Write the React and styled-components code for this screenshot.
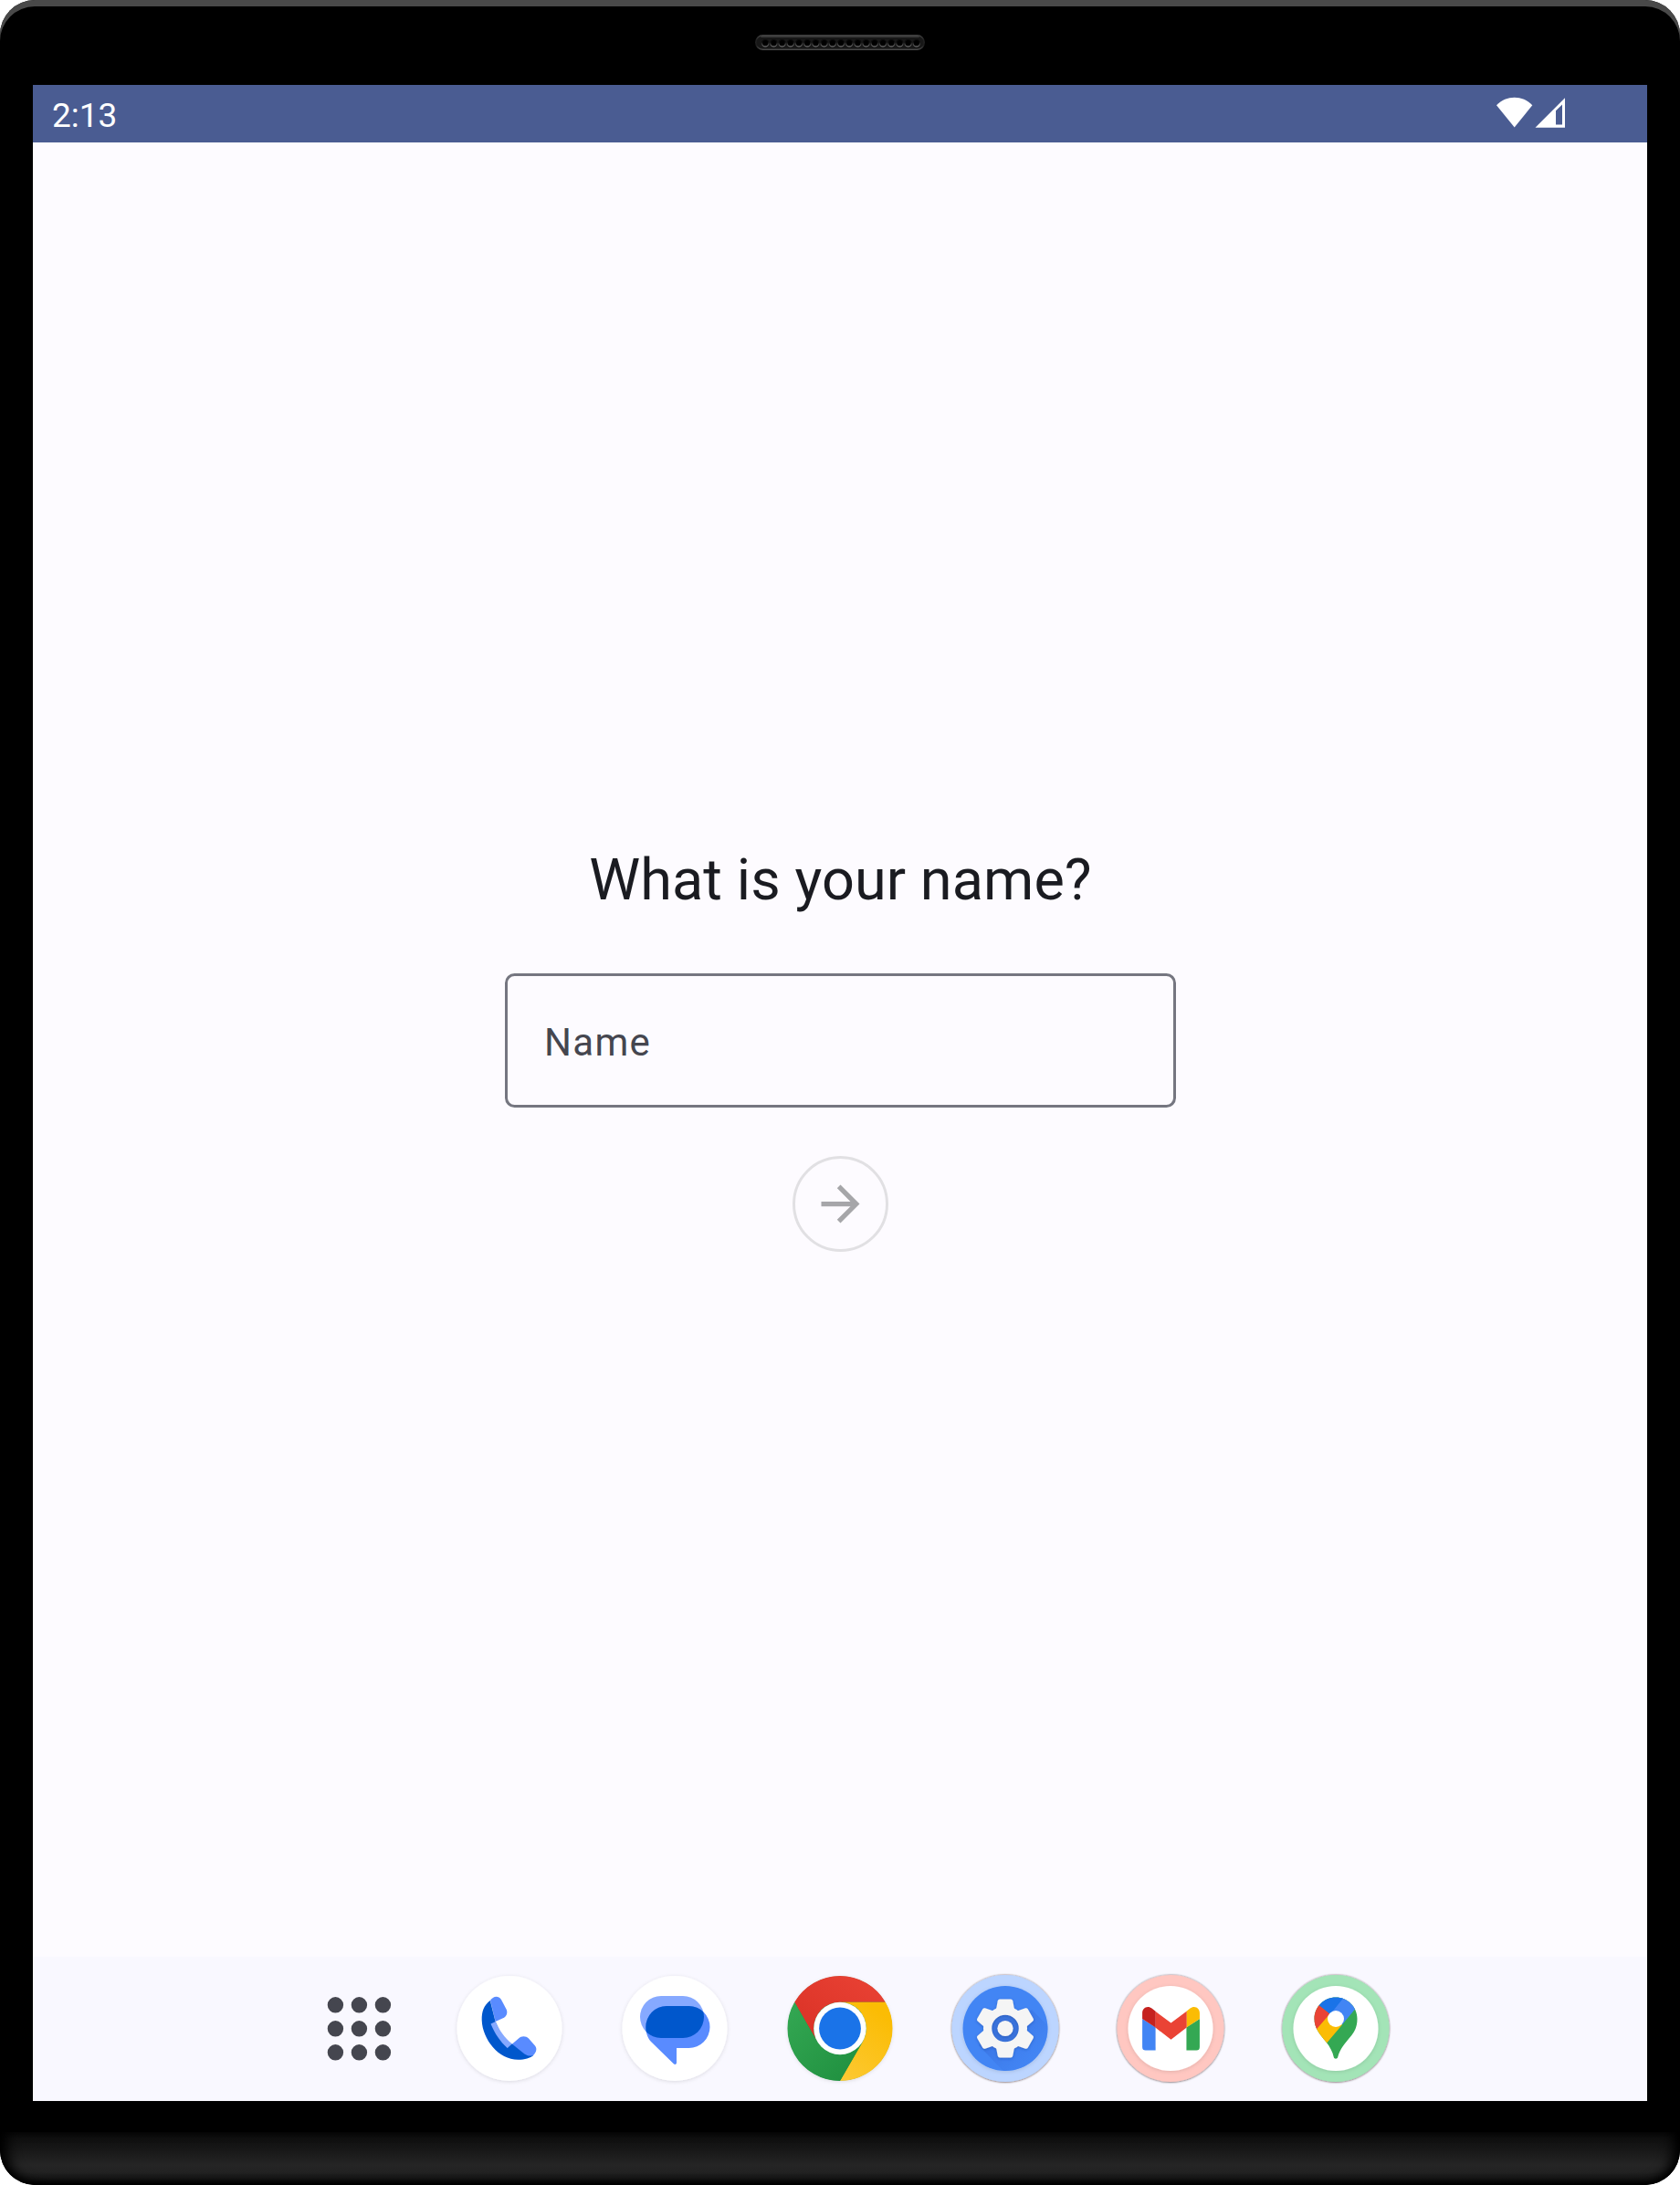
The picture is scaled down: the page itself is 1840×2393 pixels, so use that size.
import React from 'react';
import styled, { createGlobalStyle } from 'styled-components';

const GlobalStyle = createGlobalStyle`
  *, *::before, *::after { box-sizing: border-box; }
  html, body { margin: 0; padding: 0; background: #fff; }
  body { font-family: Roboto, 'Liberation Sans', sans-serif; }
`;

const Device = styled.div`
  width: 1840px;
  height: 2393px;
  border-radius: 38px;
  background: #000;
  overflow: hidden;
  display: flex;
  flex-direction: column;
  box-shadow: inset 0 7px 0 0 #494949;
`;

const TopBezel = styled.div`
  height: 93px;
  flex: none;
  display: flex;
  justify-content: center;
  align-items: flex-start;
  padding: 38px 1px 0 0;
`;

const Speaker = styled.svg`
  display: block;
`;

const Screen = styled.main`
  width: 1768px;
  height: 2208px;
  flex: none;
  margin: 0 36px;
  background: #fdfbff;
  display: flex;
  flex-direction: column;
`;

const StatusBar = styled.header`
  height: 63px;
  flex: none;
  background: #4a5c92;
  color: #fff;
  display: flex;
  align-items: center;
  justify-content: space-between;
  padding: 0 90px 0 21px;
`;

const Clock = styled.time`
  margin-top: 4px;
  font-size: 37px;
  line-height: 44px;
`;

const StatusIcons = styled.div`
  display: flex;
  align-items: flex-end;
  gap: 2px;
  margin-bottom: 3px;
  svg { display: block; }
`;

const Content = styled.section`
  flex: 1;
  display: flex;
  flex-direction: column;
  align-items: center;
  padding: 766px 0 0 1px;
`;

const Title = styled.h1`
  margin: 0;
  font-size: 63px;
  line-height: 84px;
  font-weight: 400;
  letter-spacing: 0.08px;
  color: #1a1b21;
`;

const Field = styled.label`
  width: 735px;
  height: 147px;
  margin-top: 60px;
  border: 3px solid #757680;
  border-radius: 10.5px;
  display: flex;
  align-items: center;
  padding: 4px 39px 0 40px;
`;

const Input = styled.input`
  width: 100%;
  border: 0;
  padding: 0;
  outline: 0;
  background: transparent;
  font: 400 42px/63px Roboto, 'Liberation Sans', sans-serif;
  letter-spacing: 1.31px;
  &::placeholder { color: #45464f; opacity: 1; }
`;

const NextButton = styled.button`
  width: 105px;
  height: 105px;
  margin-top: 53px;
  padding: 0;
  border: 3px solid #e1e0e3;
  border-radius: 50%;
  background: transparent;
  color: #a6a6a9;
  display: flex;
  align-items: center;
  justify-content: center;
  svg { display: block; }
`;

const Taskbar = styled.nav`
  height: 158px;
  flex: none;
  background: #f9f8ff;
  display: flex;
  align-items: flex-start;
  padding: 12.5px 0 0 292px;
  gap: 49px;
`;

const AppIcon = styled.svg`
  width: 132px;
  height: 132px;
  flex: none;
  display: block;
  overflow: visible;
`;

const GridIcon = styled(AppIcon)`
  margin-right: -16.6px;
`;

const Chin = styled.footer`
  flex: 1;
  margin-top: 34px;
  background: linear-gradient(#0d0d0d 0%, #161616 30%, #252525 62%, #222 76%, #151515 90%, #000 100%);
  border-radius: 0 0 38px 38px;
  box-shadow: inset 12px 0 14px -4px #000, inset -12px 0 14px -4px #000, inset 0 -3px 8px -2px #000;
`;

function SpeakerGrille() {
  return (
    <Speaker width="186" height="17" viewBox="0 0 186 17">
      <defs>
        <linearGradient id="rim" x1="0" y1="0" x2="0" y2="1">
          <stop offset="0" stopColor="#414141" />
          <stop offset=".3" stopColor="#242424" />
          <stop offset=".7" stopColor="#1c1c1c" />
          <stop offset="1" stopColor="#4a4a4a" />
        </linearGradient>
        <linearGradient id="hole" x1="0" y1="0" x2="0" y2="1">
          <stop offset=".35" stopColor="#0c0c0c" />
          <stop offset="1" stopColor="#747474" />
        </linearGradient>
      </defs>
      <rect x=".8" y=".8" width="184.4" height="15.4" rx="7.7" fill="#171717" stroke="url(#rim)" strokeWidth="1.6" />
      <rect x="6" y="1" width="174" height="2" rx="1" fill="#3a3a3a" />
      {Array.from({ length: 19 }, (_, i) => (
        <circle key={i} cx={11.2 + i * 9.2} cy="9.2" r="3.7" fill="#000" stroke="url(#hole)" strokeWidth="1.2" />
      ))}
    </Speaker>
  );
}

function Wifi() {
  return (
    <svg width="40" height="34" viewBox="0 0 40 34">
      <path d="M0 9.2C5.6 3.6 12.5 .8 19.7 .8S33.8 3.6 39.300 9.2L19.7 33.5Z" fill="#fff" />
    </svg>
  );
}

function Signal() {
  return (
    <svg width="33" height="34" viewBox="0 0 33 34">
      <path fillRule="evenodd" d="M.5 33.800 33 1.200V33.800ZM23 15.300V30.400H30V8.600Z" fill="#fff" />
    </svg>
  );
}

function AppsGrid() {
  return (
    <GridIcon viewBox="0 0 132 132">
      {[40, 66, 92].map((y) => [40, 66, 92].map((x) => (
        <circle key={`${x}-${y}`} cx={x - 0.6} cy={y - 0.2} r="8.7" fill="#45464f" />
      )))}
    </GridIcon>
  );
}

function WhiteDisc() {
  return <circle cx="66" cy="65.5" r="57.5" fill="#fff" filter="url(#soft)" />;
}

function Phone() {
  return (
    <AppIcon viewBox="0 0 132 132">
      <WhiteDisc />
      <g transform="translate(-.5 .5)">
        <path d="M45.5 34.500C48 30 54 28 57.500 33.500L63.300 44.500C64.500 48 63.500 51.500 60.500 53.200L51.200 57.500Z" fill="#598bff" />
        <path d="M69 82.500 76.500 76C79.500 73 84.500 73 87.500 76L94.500 84C97 87 96 91 92.500 94.500 90 96.500 87 96.500 84 94.500Z" fill="#598bff" />
        <path d="M45.300 34.500C38.500 39.500 36 46.500 36.200 56 37 77 54.500 99.300 76 99.300 83.500 99.300 89 97.500 93 94.200 89 95.800 86 95 83 93L69 81.800 64.300 86 51 57.200Z" fill="#0057cc" />
        <path d="M51.300 57.500 46 60C50.200 70.500 56.500 79.500 64.200 86.500L69.200 81.800C61 75 55.500 67.500 51.300 57.500Z" fill="#86a9ff" />
      </g>
    </AppIcon>
  );
}

function Messages() {
  const bubble = 'M57 41H81.500A23 23 0 0 1 81.500 87H68V103C68 105 66 105.500 64.800 104.200L40.500 80.500C36.500 76.500 34.300 70.500 34.300 64A23 23 0 0 1 57 41Z';
  return (
    <AppIcon viewBox="0 0 132 132">
      <defs>
        <clipPath id="backBubble"><rect x="28" y="30" width="70" height="46" rx="23" /></clipPath>
      </defs>
      <WhiteDisc />
      <rect x="28" y="30" width="70" height="46" rx="23" fill="#86a9ff" />
      <path d={bubble} fill="#598bff" />
      <path d={bubble} fill="#0057cc" clipPath="url(#backBubble)" />
    </AppIcon>
  );
}

function Chrome() {
  return (
    <AppIcon viewBox="0 0 132 132">
      <defs>
        <linearGradient id="cr" x1="0" y1="1" x2="1" y2="0"><stop stopColor="#d93025" /><stop offset="1" stopColor="#ea4335" /></linearGradient>
        <linearGradient id="cy" x1="0" y1="1" x2=".5" y2="0"><stop stopColor="#fcc934" /><stop offset="1" stopColor="#fbbc04" /></linearGradient>
        <linearGradient id="cg" x1="1" y1="1" x2="0" y2="0"><stop stopColor="#1e8e3e" /><stop offset="1" stopColor="#34a853" /></linearGradient>
      </defs>
      <circle cx="66" cy="65.5" r="57" filter="url(#soft)" fill="#1e8e3e" />
      <path d="M16.200 36.750A57.500 57.500 0 0 1 115.800 36.750H66A28.750 28.750 0 0 0 41.100 79.900Z" fill="url(#cr)" />
      <path d="M115.800 36.750A57.500 57.500 0 0 1 66 123L90.900 79.900A28.750 28.750 0 0 0 66 36.750Z" fill="url(#cy)" />
      <path d="M66 123A57.500 57.500 0 0 1 16.200 36.750L41.100 79.900A28.750 28.750 0 0 0 90.900 79.900Z" fill="url(#cg)" />
      <circle cx="66" cy="65.5" r="28.75" fill="#fff" />
      <circle cx="66" cy="65.5" r="22.9" fill="#1a73e8" />
    </AppIcon>
  );
}

function RingDisc({ ring, fill }) {
  return (
    <>
      <circle cx="66" cy="65.500" r="58.500" fill={ring} filter="url(#hard)" />
      <circle cx="66" cy="65.500" r="46.500" fill={fill} filter="url(#soft)" />
    </>
  );
}

function Settings() {
  const tooth = 'M60 33.500H72Q73.800 33.500 74.200 35.300L76.500 47H55.500L57.800 35.300Q58.200 33.500 60 33.500Z';
  return (
    <AppIcon viewBox="0 0 132 132">
      <defs>
        <linearGradient id="gearShade" gradientUnits="userSpaceOnUse" x1="60" y1="60" x2="100" y2="100">
          <stop stopColor="#3367d6" stopOpacity=".55" /><stop offset="1" stopColor="#4285f4" stopOpacity=".35" />
        </linearGradient>
        <clipPath id="gearDisc"><circle cx="66" cy="65.500" r="46.500" /></clipPath>
      </defs>
      <RingDisc ring="#bcd5ff" fill="#4285f4" />
      <path d="M95 45 140 90 90 140 37 84Z" fill="url(#gearShade)" clipPath="url(#gearDisc)" />
      <circle cx="66" cy="65.500" r="16" fill="#3b74dc" />
      <g filter="url(#gearShadow)" fill="#f5f5f5">
        {[0, 60, 120, 180, 240, 300].map((a) => (
          <path key={a} d={tooth} transform={`rotate(${a} 66 65.5)`} />
        ))}
        <circle cx="66" cy="65.500" r="19.400" fill="none" stroke="#f5f5f5" strokeWidth="9.200" />
        <circle cx="66" cy="65.500" r="8.600" />
      </g>
    </AppIcon>
  );
}

function Gmail() {
  return (
    <AppIcon viewBox="0 0 132 132">
      <RingDisc ring="#ffc7c1" fill="#fff" />
      <g transform="translate(35.1 41.7) scale(.714 .714)">
        <path d="M0 18.500 20.300 31.500V67H5Q0 67 0 62Z" fill="#4285f4" />
        <path d="M67.700 31.500 88 18.500V62Q88 67 83 67H67.700Z" fill="#34a853" />
        <path d="M67.700 7 73 3C80-2.500 88 2 88 10V18.500L67.700 32Z" fill="#fbbc04" />
        <path d="M20 7 44 25 68 7V32L44 50.500 20 32Z" fill="#ea4335" />
        <path d="M0 18.500V10C0 2 8-2.500 15 3L20.300 7V32Z" fill="#c5221f" />
      </g>
    </AppIcon>
  );
}

function Maps() {
  return (
    <AppIcon viewBox="0 0 132 132">
      <defs>
        <clipPath id="pin">
          <path d="M66 31.500C79 31.500 89.500 42 89.500 55 89.500 64 86.500 69 83 73.500 76 82 70.500 88 68.200 97 67.700 99.300 64.300 99.300 63.800 97 62.500 91 59.500 85.500 55.500 80.500 47.500 70.500 42.500 65 42.500 55 42.500 42 53 31.500 66 31.500Z" />
        </clipPath>
      </defs>
      <RingDisc ring="#a3e4b7" fill="#fff" />
      <g clipPath="url(#pin)">
        <rect x="40" y="28" width="54" height="76" fill="#34a853" />
        <path d="M72 31.500 80 28 95 28V36L87 44.500 73 61.500 57.500 51.500Z" fill="#4285f4" />
        <path d="M38 32 48 40.300 60 49.800 38 75Z" fill="#ea4335" />
        <path d="M59.500 49.500 73 61.500 56.500 81 50 91 40 72Z" fill="#fbbc04" />
        <path d="M48 40.300 60 50 74.500 32 66 25 44 30Z" fill="#1a73e8" />
      </g>
      <circle cx="66" cy="55" r="9" fill="#fff" />
    </AppIcon>
  );
}

const Defs = styled.svg`
  display: block;
  width: 0;
  height: 0;
  flex: none;
`;

function SharedFilters() {
  return (
    <Defs>
      <defs>
        <filter id="soft" x="-20%" y="-20%" width="140%" height="140%">
          <feDropShadow dx="0" dy="1" stdDeviation="2" floodColor="#000" floodOpacity=".12" />
        </filter>
        <filter id="hard" x="-20%" y="-20%" width="140%" height="140%">
          <feDropShadow dx="0" dy=".3" stdDeviation="1.300" floodColor="#201018" floodOpacity=".75" />
        </filter>
        <filter id="gearShadow" x="-20%" y="-20%" width="140%" height="140%">
          <feDropShadow dx="0" dy="1" stdDeviation="1.500" floodColor="#123a8c" floodOpacity=".4" />
        </filter>
      </defs>
    </Defs>
  );
}

export default function App() {
  return (
    <>
      <GlobalStyle />
      <Device>
        <SharedFilters />
        <TopBezel><SpeakerGrille /></TopBezel>
        <Screen>
          <StatusBar>
            <Clock>2:13</Clock>
            <StatusIcons><Wifi /><Signal /></StatusIcons>
          </StatusBar>
          <Content>
            <Title>What is your name?</Title>
            <Field><Input placeholder="Name" /></Field>
            <NextButton aria-label="Continue">
              <svg width="63" height="63" viewBox="0 0 24 24" fill="currentColor">
                <path d="m12 4-1.410 1.410L16.170 11H4v2h12.170l-5.580 5.590L12 20l8-8z" />
              </svg>
            </NextButton>
          </Content>
          <Taskbar>
            <AppsGrid />
            <Phone />
            <Messages />
            <Chrome />
            <Settings />
            <Gmail />
            <Maps />
          </Taskbar>
        </Screen>
        <Chin />
      </Device>
    </>
  );
}
